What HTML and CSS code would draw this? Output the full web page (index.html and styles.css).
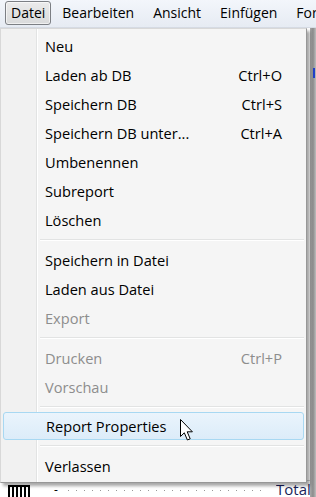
FILE: index.html
```html
<!DOCTYPE html>
<html lang="de">
<head>
    <meta charset="UTF-8">
    <meta name="viewport" content="width=device-width, initial-scale=1.0">
    <title>Datei Menu</title>
    <link rel="stylesheet" href="styles.css">
</head>
<body>
    <div class="window">
        <div class="menubar">
            <span class="menubar-item active">Datei</span>
            <span class="menubar-item">Bearbeiten</span>
            <span class="menubar-item">Ansicht</span>
            <span class="menubar-item">Einfügen</span>
            <span class="menubar-item">Format</span>
        </div>
        <div class="workspace">
            <div class="sheet">
                <div class="sheet-body"></div>
                <div class="sheet-footer">
                    <span class="barcode"></span>
                    <span class="dash">-</span>
                    <span class="dots"></span>
                    <span class="total">Total</span>
                </div>
            </div>
            <div class="scroll-strip">
                <span class="blue-mark"></span>
            </div>

            <div class="dropdown">
                <div class="menu-item"><span>Neu</span><span class="key"></span></div>
                <div class="menu-item"><span>Laden ab DB</span><span class="key">Ctrl+O</span></div>
                <div class="menu-item"><span>Speichern DB</span><span class="key">Ctrl+S</span></div>
                <div class="menu-item"><span>Speichern DB unter...</span><span class="key">Ctrl+A</span></div>
                <div class="menu-item"><span>Umbenennen</span><span class="key"></span></div>
                <div class="menu-item"><span>Subreport</span><span class="key"></span></div>
                <div class="menu-item"><span>Löschen</span><span class="key"></span></div>
                <div class="separator"></div>
                <div class="menu-item"><span>Speichern in Datei</span><span class="key"></span></div>
                <div class="menu-item"><span>Laden aus Datei</span><span class="key"></span></div>
                <div class="menu-item disabled"><span>Export</span><span class="key"></span></div>
                <div class="separator"></div>
                <div class="menu-item disabled"><span>Drucken</span><span class="key">Ctrl+P</span></div>
                <div class="menu-item disabled"><span>Vorschau</span><span class="key"></span></div>
                <div class="separator"></div>
                <div class="menu-item hover"><span>Report Properties</span><span class="key"></span>
                    <svg class="cursor" width="15" height="24" viewBox="0 0 15 24">
                        <path d="M1.5 1.5 L1.5 18.5 L5.3 14.8 L8.4 22 L11.2 20.8 L8.2 13.8 L13.4 13.8 Z" fill="#fff" stroke="#000" stroke-width="1" stroke-linejoin="round"/>
                    </svg>
                </div>
                <div class="separator"></div>
                <div class="menu-item"><span>Verlassen</span><span class="key"></span></div>
            </div>
        </div>
    </div>
</body>
</html>
```

FILE: styles.css
```css
body {
    margin: 0;
    font-family: "Open Sans", "Noto Sans", sans-serif;
    font-size: 13px;
    color: #000;
    background-color: #fff;
}
.window {
    width: 316px;
    height: 497px;
    overflow: hidden;
    display: flex;
    flex-direction: column;
}
.menubar {
    height: 28px;
    box-sizing: border-box;
    display: flex;
    align-items: center;
    gap: 3px;
    padding: 0 0 1px 5px;
    background: linear-gradient(#f3f6fb, #e6ebf3);
    border-bottom: 1px solid #d6dbe4;
    white-space: nowrap;
}
.menubar-item {
    height: 24px;
    line-height: 22px;
    padding: 0 7px;
    box-sizing: border-box;
    border: 1px solid transparent;
    font-size: 14px;
}
.menubar-item.active {
    padding: 0 5px;
    border-color: #7c7f84;
    border-radius: 3px;
    background: linear-gradient(#ebebeb, #d9dadb);
    box-shadow: inset 0 0 0 1px rgba(255,255,255,0.6);
}
.workspace {
    flex: 1;
    position: relative;
    display: flex;
}
.sheet {
    flex: 1;
    display: flex;
    flex-direction: column;
    background-color: #fff;
}
.sheet-body {
    flex: 1;
}
.sheet-footer {
    height: 16px;
    display: flex;
    align-items: flex-end;
    gap: 10px;
    padding-left: 8px;
    border-top: 1px solid #cfcfcf;
}
.barcode {
    width: 22px;
    height: 12px;
    background: repeating-linear-gradient(90deg, #000 0 2px, #fff 2px 4px);
    border-top: 2px solid #000;
    box-sizing: border-box;
}
.dash {
    margin-left: 14px;
    font-size: 12px;
    line-height: 14px;
}
.dots {
    flex: 1;
    height: 1px;
    margin-bottom: 6px;
    background: repeating-linear-gradient(90deg, #999 0 1px, transparent 1px 8px);
}
.total {
    font-size: 15px;
    line-height: 15px;
    color: #1a1f5a;
    width: 34px;
    overflow: hidden;
}
.scroll-strip {
    width: 6px;
    background: linear-gradient(90deg, #a9a9a9, #8c8c8c 50%, #bdbdbd);
    position: relative;
}
.blue-mark {
    position: absolute;
    top: 40px;
    left: 3px;
    width: 2px;
    height: 10px;
    background-color: #2340c8;
}
.dropdown {
    position: absolute;
    top: 0;
    left: 0;
    width: 307px;
    box-sizing: border-box;
    padding: 2px;
    border: 1px solid #979797;
    border-left-color: #d8d8d8;
    border-top-color: #d8d8d8;
    background-color: #f5f5f5;
    background-image: linear-gradient(90deg, #f1f1f1 0 35px, #e2e3e3 35px 36px, #fff 36px 37px, transparent 37px);
    box-shadow: 3px 3px 3px rgba(0,0,0,0.35);
}
.menu-item {
    height: 29px;
    display: flex;
    align-items: center;
    justify-content: space-between;
    padding: 0 22px 0 42px;
    font-size: 14.6px;
    position: relative;
    border: 1px solid transparent;
    box-sizing: border-box;
    margin: 0 -1px;
}
.menu-item.disabled {
    color: #8d8d8d;
}
.menu-item .key {
    font-size: 14.6px;
}
.menu-item.hover {
    border-color: #a8d8f2;
    border-radius: 3px;
    background: linear-gradient(#eaf4fc, #dcecf9);
    margin: 1px 0 0 0;
    height: 28px;
}
.separator {
    height: 1px;
    margin: 5px 0 4px 37px;
    background-color: #e2e3e3;
    border-bottom: 1px solid #fff;
}
.cursor {
    position: absolute;
    left: 175px;
    top: 5px;
}
```
